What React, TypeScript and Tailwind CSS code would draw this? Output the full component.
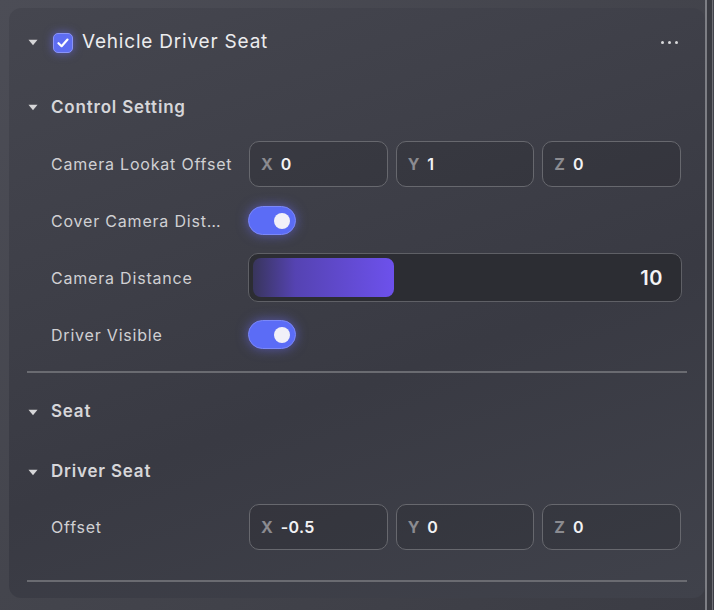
import React from "react";

const Caret = () => (
  <svg width="10" height="7" viewBox="0 0 10 7" className="shrink-0">
    <path d="M0.5 0.8 L9.5 0.8 L5 6.2 Z" fill="#d6d6d8" />
  </svg>
);

const Toggle = () => (
  <div className="w-[48px] h-[29px] rounded-full bg-[#5b6cf6] border border-[#7b88f8] shadow-[0_0_12px_rgba(110,110,255,0.55)] flex items-center justify-end pr-[5px]">
    <div className="w-[16px] h-[16px] rounded-full bg-[#f1f0f8]" />
  </div>
);

const Vec = ({ vals }: { vals: [string, string, string] }) => (
  <div className="grid grid-cols-3 gap-[8px] w-[432px] ml-[1px]">
    {(["X", "Y", "Z"] as const).map((a, i) => (
      <div
        key={a}
        className="h-[46px] rounded-[10px] border border-[#67686e] bg-[rgba(30,30,36,0.22)] flex items-center pl-[11px] gap-[8px]"
      >
        <span className="text-[16px] font-bold text-[#8b8b90]">{a}</span>
        <span className="text-[16px] font-semibold text-[#f2f2f4] tracking-[0.3px]">{vals[i]}</span>
      </div>
    ))}
  </div>
);

const Row = ({ label, h = "h-[57px]", children }: { label: string; h?: string; children: React.ReactNode }) => (
  <div className={`flex items-center ${h}`}>
    <div className="w-[221px] pl-[24px] text-[16px] text-[#d0d0d3] whitespace-nowrap tracking-[0.8px]">{label}</div>
    {children}
  </div>
);

const Section = ({ title, h }: { title: string; h: string }) => (
  <div className={`flex items-center ${h} pl-[1px] pt-[4px] gap-[13px]`}>
    <Caret />
    <span className="text-[17px] font-semibold text-[#d6d6d9] tracking-[0.8px]">{title}</span>
  </div>
);

export default function App() {
  return (
    <div
      className="w-[714px] h-[610px] overflow-hidden flex bg-[linear-gradient(135deg,#4c4d56_0%,#43444c_50%,#3b3c44_100%)]"
      style={{ fontFamily: "Inter, 'Noto Sans', sans-serif" }}
    >
      <div className="ml-[9px] mt-[8px] w-[696px] h-[590px] rounded-[12px] bg-[linear-gradient(160deg,#45464f_0%,#3e3f48_35%,#393a43_60%,#40424b_100%)] px-[18px] flex flex-col">
        <div className="flex items-center h-[68px] pl-[1px] pt-[1px]">
          <Caret />
          <div className="ml-[15px] w-[20px] h-[20px] rounded-[5px] bg-[#5e6df2] border border-[#8a94f7] shadow-[0_0_10px_rgba(110,110,255,0.6)] flex items-center justify-center">
            <svg width="12" height="10" viewBox="0 0 12 10">
              <path d="M1.5 5.2 L4.6 8.2 L10.5 1.6" stroke="#fff" strokeWidth="2.2" fill="none" strokeLinecap="round" strokeLinejoin="round" />
            </svg>
          </div>
          <span className="ml-[9px] text-[19px] text-[#ececee] tracking-[0.8px]">Vehicle Driver Seat</span>
          <div className="ml-auto mr-[9px] flex gap-[4px]">
            <div className="w-[3px] h-[3px] rounded-full bg-[#d8d8da]" />
            <div className="w-[3px] h-[3px] rounded-full bg-[#d8d8da]" />
            <div className="w-[3px] h-[3px] rounded-full bg-[#d8d8da]" />
          </div>
        </div>
        <Section title="Control Setting" h="h-[59px]" />
        <Row label="Camera Lookat Offset">
          <Vec vals={["0", "1", "0"]} />
        </Row>
        <Row label="Cover Camera Dist…">
          <Toggle />
        </Row>
        <Row label="Camera Distance">
          <div className="w-[434px] h-[49px] rounded-[10px] border border-[#5f6066] bg-[#2c2d33] flex items-center p-[4px]">
            <div className="w-[141px] h-full rounded-[8px] bg-[linear-gradient(90deg,#38355c_0%,#5543b2_30%,#6d51ec_100%)]" />
            <span className="ml-auto mr-[14px] text-[20px] font-semibold text-[#f3f3f5] tracking-[0.5px]">10</span>
          </div>
        </Row>
        <Row label="Driver Visible">
          <Toggle />
        </Row>
        <div className="mt-[8px] h-[2px] bg-[#6a6b71]" />
        <div className="h-[7px]" />
        <Section title="Seat" h="h-[60px]" />
        <Section title="Driver Seat" h="h-[60px]" />
        <Row label="Offset" h="h-[54px]">
          <Vec vals={["-0.5", "0", "0"]} />
        </Row>
        <div className="mt-[26px] h-[2px] bg-[#6a6b71]" />
      </div>
      <div className="w-[2px] h-full bg-[#7d7e84]" />
      <div className="w-[5px] h-full bg-[#3a3b42]" />
      <div className="w-[1px] h-full bg-[#6e6f75]" />
    </div>
  );
}
